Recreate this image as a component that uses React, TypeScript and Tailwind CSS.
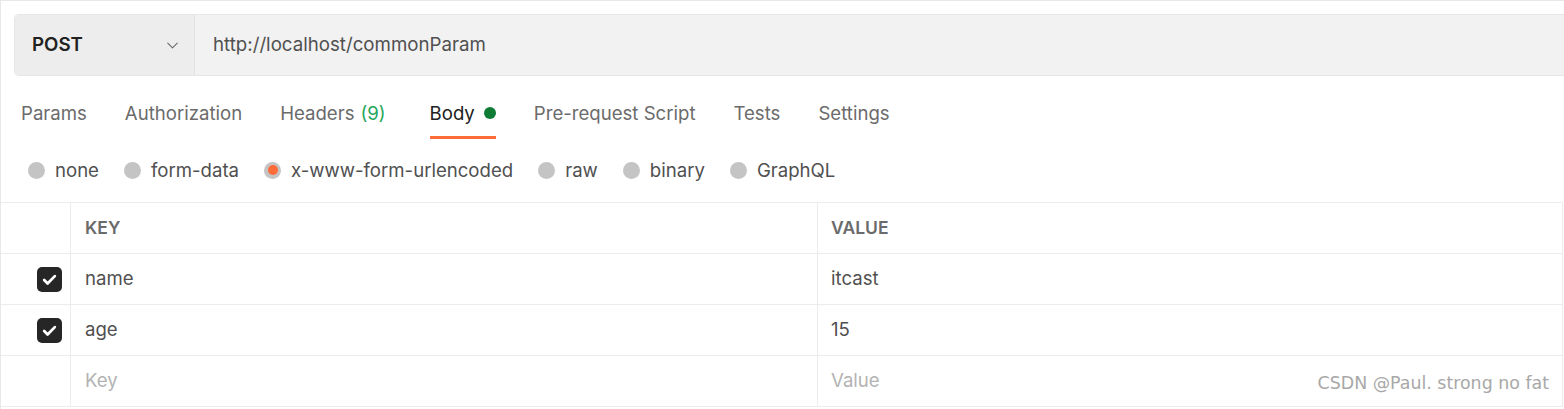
import { ChevronDown } from "lucide-react";

const tabs = [
  { label: "Params" },
  { label: "Authorization" },
  { label: "Headers", count: "(9)" },
  { label: "Body", active: true },
  { label: "Pre-request Script" },
  { label: "Tests" },
  { label: "Settings" },
];

const bodyTypes = ["none", "form-data", "x-www-form-urlencoded", "raw", "binary", "GraphQL"];

const rows = [
  { key: "name", value: "itcast" },
  { key: "age", value: "15" },
];

function Check() {
  return (
    <div className="w-[25px] h-[25px] rounded-[5px] bg-[#262626] flex items-center justify-center">
      <svg width="17" height="17" viewBox="0 0 16 16" fill="none">
        <path d="M3 8.5l3.2 3.2L13 4.8" stroke="white" strokeWidth="2.6" strokeLinecap="round" strokeLinejoin="round" />
      </svg>
    </div>
  );
}

export default function App() {
  return (
    <div
      className="relative w-[1564px] h-[409px] bg-white border-t border-l border-[#e8e8e8] overflow-hidden"
      style={{ fontFamily: "Inter, 'Noto Sans', sans-serif" }}
    >
      {/* url bar */}
      <div className="pt-[13px] pl-[13px]">
        <div className="flex h-[62px] rounded-l-[5px] border border-r-0 border-[#e6e6e6] bg-[#f2f2f2] overflow-hidden">
          <div className="w-[180px] flex items-center justify-between pl-[17px] pr-[12px] bg-[#ededed] border-r border-[#e3e3e3]">
            <span className="text-[18.7px] font-semibold text-[#212121]">POST</span>
            <ChevronDown size={19} strokeWidth={1.4} className="text-[#6b6b6b]" />
          </div>
          <div className="flex items-center pl-[18px] text-[18.7px] text-[#505050]">
            http://localhost/commonParam
          </div>
        </div>
      </div>

      {/* tabs */}
      <div className="flex gap-[38px] pl-[20px] mt-[25px]">
        {tabs.map((t) => (
          <div key={t.label} className={"flex flex-col" + (t.count ? " pr-[6px]" : "")}>
            <div
              className={
                "h-[24px] leading-[24px] text-[18.6px] flex items-center " +
                (t.active ? "text-[#212121]" : "text-[#6b6b6b]")
              }
            >
              {t.label}
              {t.count && <span className="ml-[6px] text-[#26a65b]">{t.count}</span>}
              {t.active && <span className="ml-[9px] w-[12px] h-[12px] rounded-full bg-[#0e7c34]" />}
            </div>
            <div className={"mt-[11px] h-[3px] " + (t.active ? "bg-[#ff6c37]" : "bg-transparent")} />
          </div>
        ))}
      </div>

      {/* body types */}
      <div className="flex items-center h-[63px] pl-[27px] gap-[25px]">
        {bodyTypes.map((b) => {
          const sel = b === "x-www-form-urlencoded";
          return (
            <div key={b} className="flex items-center gap-[10px]">
              <span className="w-[17px] h-[17px] rounded-full bg-[#c4c4c4] flex items-center justify-center">
                {sel && <span className="w-[10px] h-[10px] rounded-full bg-[#ff6c37]" />}
              </span>
              <span className="text-[18.6px] text-[#505050]">{b}</span>
            </div>
          );
        })}
      </div>

      {/* table */}
      <div className="mr-[1px] border-t border-[#ececec] grid grid-cols-[70px_747px_1fr] border-r">
        <div className="h-[51px] border-r border-b border-[#ececec]" />
        <div className="h-[51px] border-r border-b border-[#ececec] flex items-center pl-[14px] text-[17.5px] font-semibold text-[#6b6b6b]">
          KEY
        </div>
        <div className="h-[51px] border-b border-[#ececec] flex items-center pl-[13px] text-[17.5px] font-semibold text-[#6b6b6b]">
          VALUE
        </div>
        {rows.map((r) => (
          <div key={r.key} className="contents">
            <div className="h-[51px] border-r border-b border-[#ececec] flex items-center justify-end pr-[8px]">
              <Check />
            </div>
            <div className="h-[51px] border-r border-b border-[#ececec] flex items-center pl-[14px] text-[18.6px] text-[#505050]">
              {r.key}
            </div>
            <div className="h-[51px] border-b border-[#ececec] flex items-center pl-[13px] text-[18.6px] text-[#505050]">
              {r.value}
            </div>
          </div>
        ))}
        <div className="h-[51px] border-r border-b border-[#ececec]" />
        <div className="h-[51px] border-r border-b border-[#ececec] flex items-center pl-[14px] text-[18.6px] text-[#b3b3b3]">
          Key
        </div>
        <div className="h-[51px] border-b border-[#ececec] flex items-center pl-[13px] text-[18.6px] text-[#b3b3b3]">
          Value
        </div>
      </div>

      <div
        className="absolute right-[15px] top-[369px] text-[17.4px] text-[#a8a8a8]"
        style={{ fontFamily: "'DejaVu Sans', sans-serif" }}
      >
        CSDN @Paul. strong no fat
      </div>
    </div>
  );
}
